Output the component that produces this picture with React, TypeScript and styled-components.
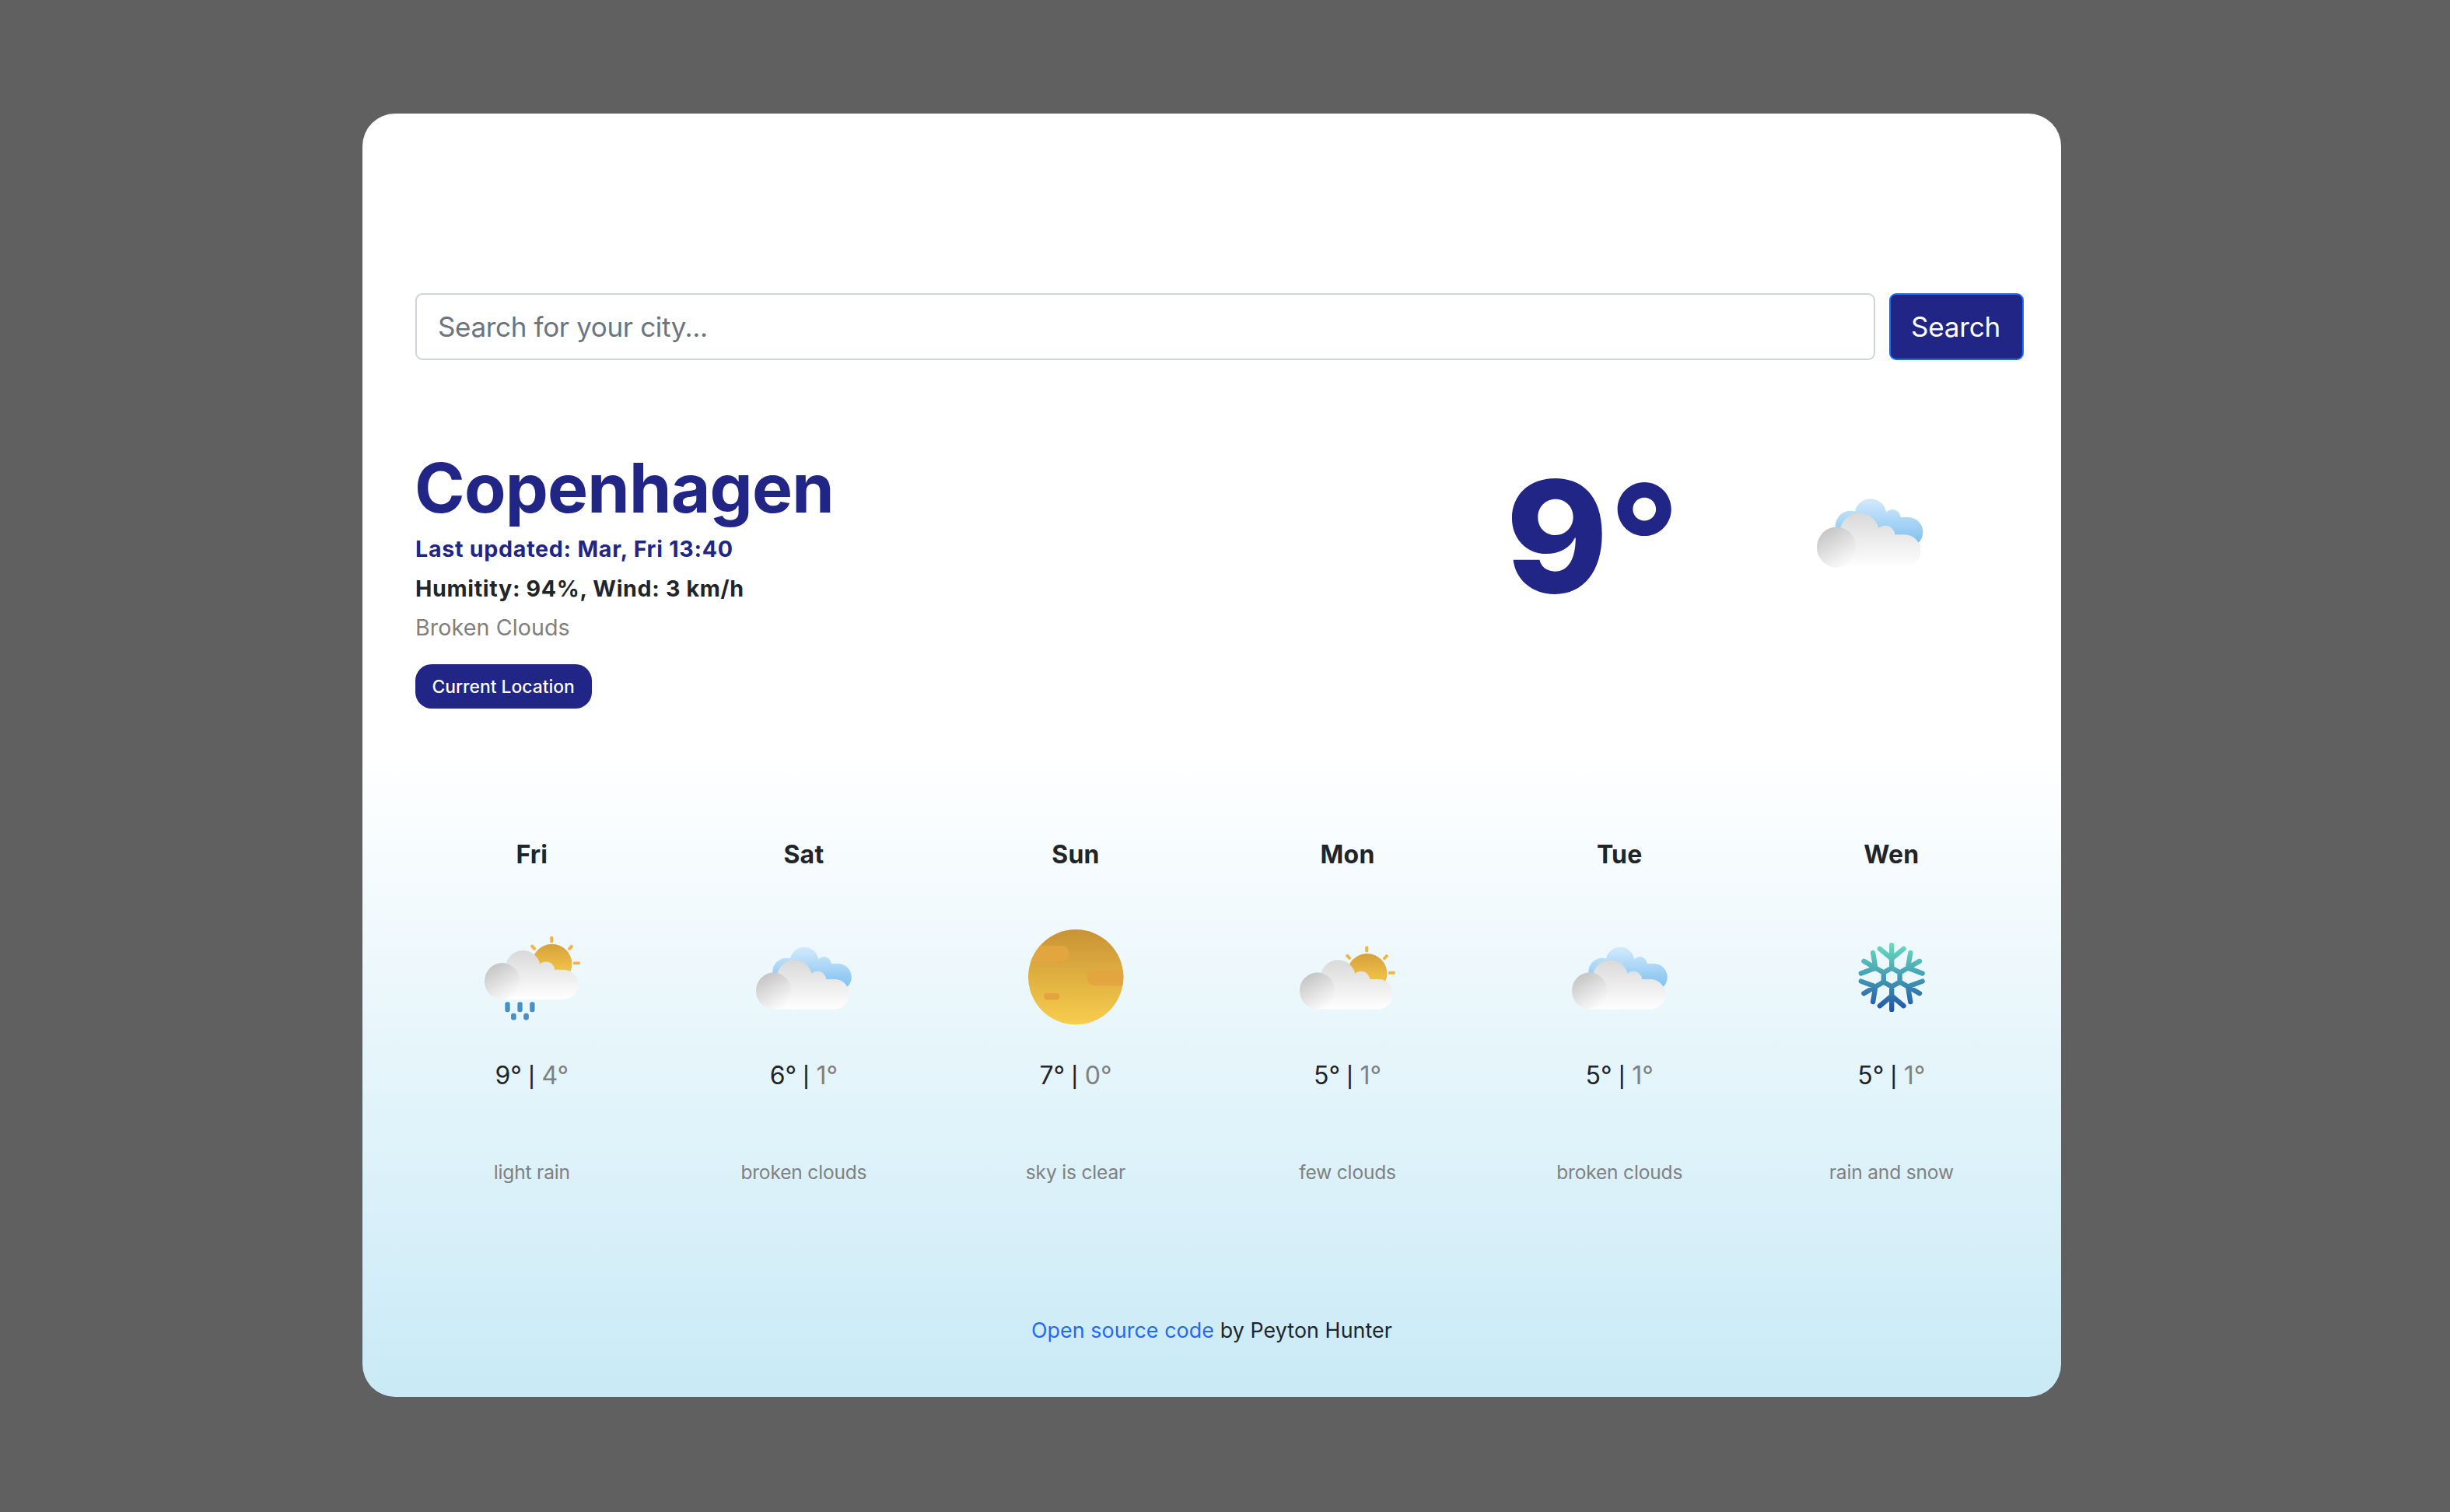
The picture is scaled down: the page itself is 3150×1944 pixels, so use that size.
import React from "react";
import styled, { createGlobalStyle } from "styled-components";

const NAVY = "#202586";
const INK = "#212529";
const MUTED = "#808080";

const GlobalStyle = createGlobalStyle`
  *, *::before, *::after { box-sizing: border-box; }
  html, body { margin: 0; padding: 0; background: #606060; }
  body {
    font-family: Inter, "Liberation Sans", sans-serif;
    color: ${INK};
    -webkit-font-smoothing: antialiased;
  }
`;

const Page = styled.div`
  width: 3150px;
  height: 1944px;
  padding: 146.3px 0 0 466px;
  background: #606060;
`;

const Card = styled.main`
  width: 2184px;
  height: 1650.2px;
  padding: 230.7px 48px 0 67px;
  border-radius: 42px;
  background: linear-gradient(to bottom, #ffffff 50%, #c9eaf6 100%);
  display: flex;
  flex-direction: column;
`;

const SearchForm = styled.form`
  display: flex;
  gap: 18px;
  height: 86px;
  padding-left: 1px;
`;

const SearchInput = styled.input`
  flex: 1;
  min-width: 0;
  height: 86px;
  padding: 1px 27px 0;
  border: 2px solid #ced4da;
  border-radius: 9px;
  background: #fff;
  font: 400 35px Inter, "Liberation Sans", sans-serif;
  letter-spacing: -0.34px;
  outline: none;
  &::placeholder { color: #6c757d; opacity: 1; }
`;

const SearchButton = styled.button`
  width: 173px;
  height: 86px;
  padding: 1px 2px 0 0;
  border: 2px solid #1b6cf8;
  border-radius: 9px;
  background: ${NAVY};
  color: #fff;
  font: 400 35px Inter, "Liberation Sans", sans-serif;
  letter-spacing: -0.23px;
`;

const Current = styled.section`
  display: grid;
  grid-template-columns: 1403px 400px 136px;
  margin-top: 110px;
  height: 338px;
`;

const Summary = styled.div`
  display: flex;
  flex-direction: column;
  align-items: flex-start;
`;

const City = styled.h1`
  margin: 0;
  font-size: 87.4px;
  line-height: 108px;
  font-weight: 700;
  letter-spacing: -0.76px;
  color: ${NAVY};
`;

const Detail = styled.p<{ $color: string; $weight: number; $track: number }>`
  margin: 0;
  padding-left: 1px;
  font-size: 28.6px;
  line-height: 50.6px;
  white-space: nowrap;
  color: ${(p) => p.$color};
  font-weight: ${(p) => p.$weight};
  letter-spacing: ${(p) => p.$track}px;
`;

const LocationButton = styled.button`
  width: 227px;
  height: 57px;
  margin: 21.500px 0 0 0.600px;
  padding: 0;
  border: 0;
  border-radius: 21px;
  background: ${NAVY};
  color: #fff;
  font: 500 22.8px Inter, "Liberation Sans", sans-serif;
  letter-spacing: 0.03px;
`;

const Temperature = styled.div`
  display: flex;
  height: 233px;
  font-size: 199px;
  line-height: 233px;
  font-weight: 800;
  color: ${NAVY};
`;

const Digits = styled.span`
  width: 129px;
`;

const Degree = styled.span`
  margin: 4px 0 0 3.500px;
  font-weight: 700;
`;

const CurrentIcon = styled.div`
  padding-top: 43px;
`;

const Forecast = styled.section`
  display: grid;
  grid-template-columns: repeat(6, 349.6px);
  margin: 164px 0 0 -24px;
`;

const Day = styled.article`
  display: flex;
  flex-direction: column;
  align-items: center;
`;

const DayName = styled.h2`
  margin: 0 0 72px;
  font-size: 32px;
  line-height: 48px;
  font-weight: 700;
  letter-spacing: 0.2px;
`;

const Temps = styled.div`
  display: flex;
  align-items: baseline;
  height: 48px;
  margin-top: 42px;
  font-size: 32px;
  line-height: 48px;
`;

const Divider = styled.span`
  margin: 0 8.500px 0 8px;
  font-size: 26px;
  line-height: 26px;
  font-weight: 500;
`;

const Low = styled.span`
  color: ${MUTED};
`;

const Description = styled.div`
  margin-top: 81.500px;
  font-size: 24.5px;
  line-height: 36px;
  letter-spacing: -0.16px;
  color: ${MUTED};
`;

const Footer = styled.footer`
  margin: 165px -48px 0 -67px;
  text-align: center;
  font-size: 26.8px;
  line-height: 40px;
  letter-spacing: 0.1px;
`;

const SourceLink = styled.a`
  color: #2269f5;
  text-decoration: none;
`;

const Svg = styled.svg<{ $size: number }>`
  display: block;
  width: ${(p) => p.$size}px;
  height: ${(p) => p.$size}px;
  overflow: visible;
`;

type IconProps = { id: string; size?: number };

function Gradient({ id, y1, y2, stops }: { id: string; y1: number; y2: number; stops: string[] }) {
  return (
    <linearGradient id={id} gradientUnits="userSpaceOnUse" x1="0" x2="0" y1={y1} y2={y2}>
      {stops.map((color, i) => (
        <stop key={i} offset={i / (stops.length - 1)} stopColor={color} />
      ))}
    </linearGradient>
  );
}

function FrontCloud({ id }: { id: string }) {
  return (
    <g>
      <defs>
        <Gradient id={`${id}-body`} y1={163} y2={352} stops={["#d9d9d9", "#ffffff"]} />
        <linearGradient id={`${id}-puff`} gradientUnits="userSpaceOnUse" x1="100" y1="222" x2="172" y2="346">
          <stop offset="0" stopColor="#c6c6c6" />
          <stop offset="1" stopColor="#fcfcfc" />
        </linearGradient>
      </defs>
      <g fill={`url(#${id}-body)`}>
        <circle cx="216" cy="231" r="68" />
        <circle cx="305" cy="240" r="33.5" />
        <rect x="140" y="237" width="288.5" height="115" rx="57.5" />
        <rect x="137" y="281" width="100" height="71" />
      </g>
      <ellipse cx="136" cy="281.5" rx="68" ry="70.5" fill={`url(#${id}-puff)`} />
    </g>
  );
}

function BrokenClouds({ id, size = 122.4 }: IconProps) {
  return (
    <Svg $size={size} viewBox="68 45 367 367">
      <defs>
        <Gradient id={`${id}-sky`} y1={113} y2={268} stops={["#d3eafc", "#80c1f1"]} />
      </defs>
      <g fill={`url(#${id}-sky)`}>
        <circle cx="185" cy="208" r="53" />
        <circle cx="254" cy="168" r="55" />
        <circle cx="330" cy="178" r="28" />
        <rect x="190" y="177" width="195" height="90" />
        <circle cx="384" cy="229" r="52" />
      </g>
      <FrontCloud id={id} />
    </Svg>
  );
}

function SunBehind({ id, ray }: { id: string; ray: string }) {
  return (
    <g>
      <defs>
        <Gradient id={`${id}-sun`} y1={138} y2={255} stops={["#d8a13c", "#f3c74b"]} />
      </defs>
      <circle cx="328" cy="215" r="77" fill={`url(#${id}-sun)`} />
      <g fill="none" stroke={ray} strokeWidth="12" strokeLinecap="round">
        <path d="M326.500 114.500V127.500M251.500 146.500L260 155.500M403.500 147.500L395 156.500" />
      </g>
      <rect x="410" y="206.500" width="26" height="11.500" rx="3" fill={ray} />
    </g>
  );
}

function FewClouds({ id, size = 122.4 }: IconProps) {
  return (
    <Svg $size={size} viewBox="68 45 367 367">
      <SunBehind id={id} ray="#efb840" />
      <FrontCloud id={id} />
    </Svg>
  );
}

function LightRain({ id, size = 122.4 }: IconProps) {
  return (
    <Svg $size={size} viewBox="68 45 367 367">
      <g transform="translate(0 -37)">
        <SunBehind id={id} ray="#f7b246" />
        <FrontCloud id={id} />
      </g>
      <g fill="#4690c8">
        <rect x="147" y="324.500" width="19" height="39" rx="8" />
        <rect x="195" y="324.500" width="19" height="39" rx="8" />
        <rect x="242.500" y="324.500" width="19" height="39" rx="8" />
        <rect x="170" y="368" width="20" height="26" rx="9" />
        <rect x="218.500" y="368" width="20" height="26" rx="9" />
      </g>
    </Svg>
  );
}

function ClearSky({ id, size = 122.4 }: IconProps) {
  return (
    <Svg $size={size} viewBox="66 45 367 367">
      <defs>
        <Gradient id={`${id}-disc`} y1={45} y2={412} stops={["#c99235", "#f7ce4d"]} />
        <clipPath id={`${id}-clip`}>
          <circle cx="249.500" cy="228.500" r="183.500" />
        </clipPath>
      </defs>
      <circle cx="249.500" cy="228.500" r="183.500" fill={`url(#${id}-disc)`} />
      <g fill="#e3a53d" clipPath={`url(#${id}-clip)`}>
        <rect x="40" y="107.500" width="184" height="61" rx="30" />
        <rect x="292" y="200.500" width="180" height="61" rx="30" />
        <rect x="126.500" y="291" width="61" height="24.500" rx="12" />
      </g>
    </Svg>
  );
}

function flakePath() {
  const cx = 216.5;
  const cy = 229.5;
  const turn = (x: number, y: number, k: number) => {
    const a = (k * Math.PI) / 3;
    const px = cx + x * Math.cos(a) - y * Math.sin(a);
    const py = cy + x * Math.sin(a) + y * Math.cos(a);
    return `${px.toFixed(1)} ${py.toFixed(1)}`;
  };
  const arms = [0, 1, 2, 3, 4, 5].map(
    (k) =>
      `M${turn(0, -36, k)}L${turn(0, -124, k)}M${turn(-46, -110, k)}L${turn(0, -72, k)}L${turn(46, -110, k)}`
  );
  const ring = [0, 1, 2, 3, 4, 5].map((k) => `${k ? "L" : "M"}${turn(0, -36, k)}`).join("") + "Z";
  return arms.join("") + ring;
}

function Snow({ id, size = 122.4 }: IconProps) {
  return (
    <Svg $size={size} viewBox="33 45 367 367">
      <defs>
        <Gradient id={`${id}-ice`} y1={97} y2={361} stops={["#68dfc0", "#439bb4", "#2053a8"]} />
      </defs>
      <path
        d={flakePath()}
        fill="none"
        stroke={`url(#${id}-ice)`}
        strokeWidth="19"
        strokeLinecap="round"
        strokeLinejoin="round"
      />
    </Svg>
  );
}

const days = [
  { name: "Fri", Icon: LightRain, high: 9, low: 4, text: "light rain" },
  { name: "Sat", Icon: BrokenClouds, high: 6, low: 1, text: "broken clouds" },
  { name: "Sun", Icon: ClearSky, high: 7, low: 0, text: "sky is clear" },
  { name: "Mon", Icon: FewClouds, high: 5, low: 1, text: "few clouds" },
  { name: "Tue", Icon: BrokenClouds, high: 5, low: 1, text: "broken clouds" },
  { name: "Wen", Icon: Snow, high: 5, low: 1, text: "rain and snow" },
];

export default function App() {
  return (
    <>
      <GlobalStyle />
      <Page>
        <Card>
          <SearchForm>
            <SearchInput placeholder="Search for your city..." />
            <SearchButton type="button">Search</SearchButton>
          </SearchForm>
          <Current>
            <Summary>
              <City>Copenhagen</City>
              <Detail $color={NAVY} $weight={700} $track={0.74}>Last updated: Mar, Fri 13:40</Detail>
              <Detail $color={INK} $weight={700} $track={0.67}>Humitity: 94%, Wind: 3 km/h</Detail>
              <Detail $color={MUTED} $weight={400} $track={0.12}>Broken Clouds</Detail>
              <LocationButton type="button">Current Location</LocationButton>
            </Summary>
            <Temperature>
              <Digits>9</Digits>
              <Degree>°</Degree>
            </Temperature>
            <CurrentIcon>
              <BrokenClouds id="now" size={136} />
            </CurrentIcon>
          </Current>
          <Forecast>
            {days.map(({ name, Icon, high, low, text }) => (
              <Day key={name}>
                <DayName>{name}</DayName>
                <Icon id={name} />
                <Temps>
                  <span>{high}°</span>
                  <Divider>|</Divider>
                  <Low>{low}°</Low>
                </Temps>
                <Description>{text}</Description>
              </Day>
            ))}
          </Forecast>
          <Footer>
            <SourceLink href="#">Open source code</SourceLink> by Peyton Hunter
          </Footer>
        </Card>
      </Page>
    </>
  );
}
